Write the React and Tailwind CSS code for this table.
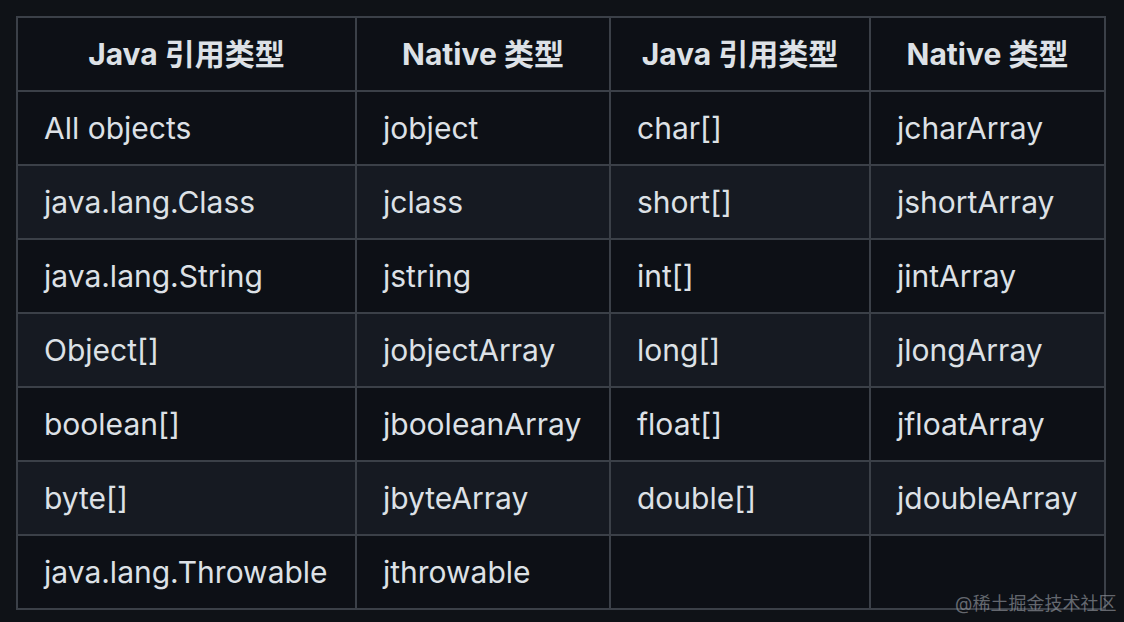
import React from "react";

const header = ["Java 引用类型", "Native 类型", "Java 引用类型", "Native 类型"];
const rows = [
  ["All objects", "jobject", "char[]", "jcharArray"],
  ["java.lang.Class", "jclass", "short[]", "jshortArray"],
  ["java.lang.String", "jstring", "int[]", "jintArray"],
  ["Object[]", "jobjectArray", "long[]", "jlongArray"],
  ["boolean[]", "jbooleanArray", "float[]", "jfloatArray"],
  ["byte[]", "jbyteArray", "double[]", "jdoubleArray"],
  ["java.lang.Throwable", "jthrowable", "", ""],
];

export default function App() {
  return (
    <div
      className="relative w-[1124px] h-[622px] bg-[#0f1217] pt-[16px] pl-[16px] text-[#dde1e6]"
      style={{ fontFamily: 'Inter, "Noto Sans CJK SC", sans-serif' }}
    >
      <div className="grid grid-cols-[337px_252px_258px_233px] gap-[2px] bg-[#3b4048] p-[2px] w-fit">
        {header.map((h, i) => (
          <div
            key={"h" + i}
            className="h-[72px] bg-[#0d1016] flex items-center justify-center text-[30px] font-bold"
          >
            {h}
          </div>
        ))}
        {rows.map((r, ri) =>
          r.map((c, ci) => (
            <div
              key={ri + "-" + ci}
              className={
                "h-[72px] flex items-center pl-[26px] text-[30px] " +
                (ri % 2 === 1 ? "bg-[#161a22]" : "bg-[#0d1016]")
              }
            >
              {c}
            </div>
          ))
        )}
      </div>
      <div className="absolute left-[955px] top-[590px] text-[18px] text-[#8b8f96]/70 whitespace-nowrap">
        @稀土掘金技术社区
      </div>
    </div>
  );
}
